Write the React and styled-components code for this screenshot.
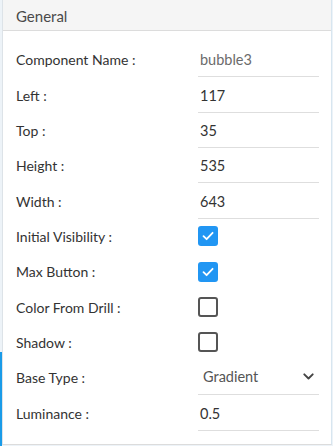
import React from 'react'
import styled, { createGlobalStyle } from 'styled-components'

const GlobalStyle = createGlobalStyle`
  html, body { margin: 0; padding: 0; background: #fff; }
  body { font-family: "Lato", "Open Sans", sans-serif; }
`

const rows = [
  { label: 'Component Name :', type: 'text', value: 'bubble3', muted: true },
  { label: 'Left :', type: 'text', value: '117' },
  { label: 'Top :', type: 'text', value: '35' },
  { label: 'Height :', type: 'text', value: '535' },
  { label: 'Width :', type: 'text', value: '643' },
  { label: 'Initial Visibility :', type: 'check', value: true },
  { label: 'Max Button :', type: 'check', value: true },
  { label: 'Color From Drill :', type: 'check', value: false },
  { label: 'Shadow :', type: 'check', value: false },
  { label: 'Base Type :', type: 'select', value: 'Gradient' },
  { label: 'Luminance :', type: 'text', value: '0.5' },
]

const Check = ({ checked }) => (
  <CheckBox $checked={checked}>
    {checked && (
      <svg width="14" height="14" viewBox="0 0 14 14">
        <path d="M2.5 7.2 L5.6 10.2 L11.6 3.8" fill="none" stroke="#fff" strokeWidth="1.8" strokeLinecap="round" strokeLinejoin="round" />
      </svg>
    )}
  </CheckBox>
)

const Chevron = () => (
  <svg width="11" height="7" viewBox="0 0 11 7">
    <path d="M1.3 1.3 L5.5 5.5 L9.7 1.3" fill="none" stroke="#444" strokeWidth="1.9" strokeLinecap="round" strokeLinejoin="round" />
  </svg>
)

export default function App() {
  return (
    <Frame>
      <GlobalStyle />
      <Panel>
        <Header>General</Header>
        <Body>
          {rows.map((r) => (
            <Row key={r.label}>
              <Label>{r.label}</Label>
              <Field>
                {r.type === 'text' && <TextValue $muted={r.muted}>{r.value}</TextValue>}
                {r.type === 'check' && <Check checked={r.value} />}
                {r.type === 'select' && (
                  <SelectValue>
                    <span>{r.value}</span>
                    <Chevron />
                  </SelectValue>
                )}
              </Field>
            </Row>
          ))}
        </Body>
      </Panel>
      <Accent />
    </Frame>
  )
}

const Frame = styled.div`
  position: relative;
  width: 333px;
  height: 446px;
  background: #edf3f8;
  padding: 0 1px 0 2px;
  box-sizing: border-box;
  overflow: hidden;
`

const Panel = styled.div`
  height: 444px;
  background: #fff;
  border-left: 1px solid #dde3e8;
  border-right: 1px solid #d8e6f0;
  border-bottom: 1px solid #dcdcdc;
`

const Header = styled.div`
  height: 31px;
  box-sizing: border-box;
  padding: 7px 0 0 13px;
  background: #f5f5f5;
  border-bottom: 1px solid #dcdcdc;
  color: #4a4a4a;
  font-size: 15px;
  line-height: 18px;
`

const Body = styled.div`
  padding-top: 11px;
`

const Row = styled.div`
  display: flex;
  align-items: center;
  height: 35.35px;
  padding-left: 13px;
`

const Label = styled.div`
  width: 182px;
  color: #333;
  font-size: 14px;
`

const Field = styled.div`
  width: 121px;
  height: 100%;
  display: flex;
  align-items: center;
`

const TextValue = styled.div`
  width: 100%;
  height: 100%;
  box-sizing: border-box;
  display: flex;
  align-items: center;
  padding: 1px 0 0 2px;
  border-bottom: 1.5px solid #dedede;
  color: ${(p) => (p.$muted ? '#6b6b6b' : '#333')};
  font-size: 14.5px;
`

const SelectValue = styled(TextValue)`
  justify-content: space-between;
  padding: 0 5px 2px 5px;
  color: #555;
`

const CheckBox = styled.div`
  width: 20px;
  height: 20px;
  box-sizing: border-box;
  border-radius: 3px;
  display: flex;
  align-items: center;
  justify-content: center;
  background: ${(p) => (p.$checked ? '#2196f3' : '#fff')};
  border: ${(p) => (p.$checked ? 'none' : '2px solid #555')};
`

const Accent = styled.div`
  position: absolute;
  left: 0;
  top: 352px;
  bottom: 0;
  width: 2px;
  background: #1a9be8;
`
